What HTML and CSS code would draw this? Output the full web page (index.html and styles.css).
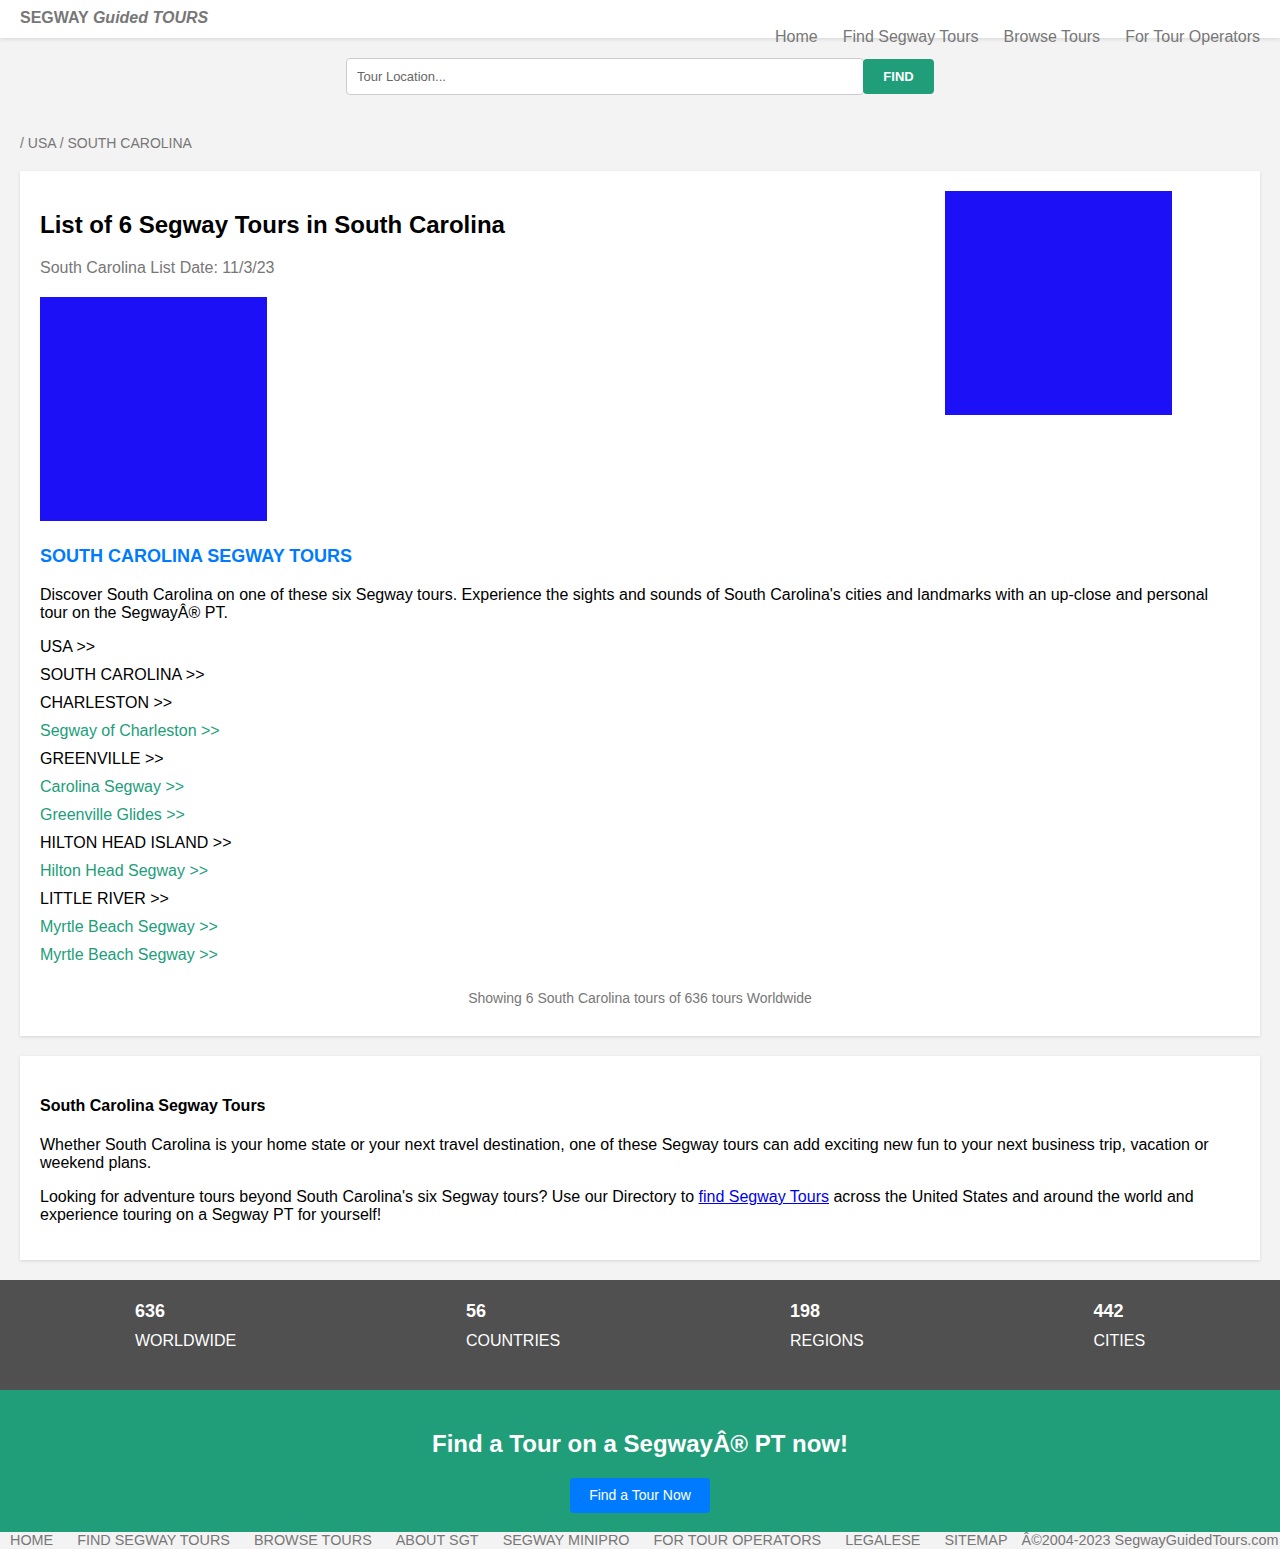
FILE: index.html
```html
<!DOCTYPE html>
<html lang="en">
<head>
<meta charset="utf-8">
<title>Segway Tours in South Carolina</title>
<link rel="stylesheet" href="styles.css">
</head>
<body>
<header class="topbar">
  <div class="logo">SEGWAY <em>Guided TOURS</em></div>
  <nav class="mainnav">
    <a href="#">Home</a>
    <a href="#">Find Segway Tours</a>
    <a href="#">Browse Tours</a>
    <a href="#">For Tour Operators</a>
  </nav>
</header>

<form class="search">
  <input class="search-input" type="text" placeholder="Tour Location...">
  <button class="search-btn" type="button">FIND</button>
</form>

<div class="crumbs">/ USA / SOUTH CAROLINA</div>

<main>
  <section class="card card-list">
    <div class="list-top">
      <div class="list-main">
        <h1 class="list-title">List of 6 Segway Tours in South Carolina</h1>
        <p class="list-date">South Carolina List Date: 11/3/23</p>
        <div class="blue-box"></div>
      </div>
      <div class="list-side">
        <div class="blue-box"></div>
      </div>
    </div>
    <h2 class="section-head">SOUTH CAROLINA SEGWAY TOURS</h2>
    <p class="desc">Discover South Carolina on one of these six Segway tours. Experience the sights and sounds of South Carolina's cities and landmarks with an up-close and personal tour on the SegwayÂ® PT.</p>
    <ul class="tour-list">
      <li>USA &gt;&gt;</li>
      <li>SOUTH CAROLINA &gt;&gt;</li>
      <li>CHARLESTON &gt;&gt;</li>
      <li><a class="tour" href="#">Segway of Charleston &gt;&gt;</a></li>
      <li>GREENVILLE &gt;&gt;</li>
      <li><a class="tour" href="#">Carolina Segway &gt;&gt;</a></li>
      <li><a class="tour" href="#">Greenville Glides &gt;&gt;</a></li>
      <li>HILTON HEAD ISLAND &gt;&gt;</li>
      <li><a class="tour" href="#">Hilton Head Segway &gt;&gt;</a></li>
      <li>LITTLE RIVER &gt;&gt;</li>
      <li><a class="tour" href="#">Myrtle Beach Segway &gt;&gt;</a></li>
      <li><a class="tour" href="#">Myrtle Beach Segway &gt;&gt;</a></li>
    </ul>
    <p class="showing">Showing 6 South Carolina tours of 636 tours Worldwide</p>
  </section>

  <section class="card card-about">
    <h3 class="about-head">South Carolina Segway Tours</h3>
    <p class="about-p">Whether South Carolina is your home state or your next travel destination, one of these Segway tours can add exciting new fun to your next business trip, vacation or weekend plans.</p>
    <p class="about-p">Looking for adventure tours beyond South Carolina's six Segway tours? Use our Directory to <a class="inline-link" href="#">find Segway Tours</a> across the United States and around the world and experience touring on a Segway PT for yourself!</p>
  </section>
</main>

<section class="stats">
  <div class="stat"><div class="stat-num">636</div><div class="stat-label">WORLDWIDE</div></div>
  <div class="stat"><div class="stat-num">56</div><div class="stat-label">COUNTRIES</div></div>
  <div class="stat"><div class="stat-num">198</div><div class="stat-label">REGIONS</div></div>
  <div class="stat"><div class="stat-num">442</div><div class="stat-label">CITIES</div></div>
</section>

<section class="cta">
  <h2 class="cta-title">Find a Tour on a SegwayÂ® PT now!</h2>
  <a class="cta-btn" href="#">Find a Tour Now</a>
</section>

<footer class="footer">
  <a href="#">HOME</a>
  <a href="#">FIND SEGWAY TOURS</a>
  <a href="#">BROWSE TOURS</a>
  <a href="#">ABOUT SGT</a>
  <a href="#">SEGWAY MINIPRO</a>
  <a href="#">FOR TOUR OPERATORS</a>
  <a href="#">LEGALESE</a>
  <a href="#">SITEMAP</a>
  <span class="copy">Â©2004-2023 SegwayGuidedTours.com</span>
</footer>
</body>
</html>
```

FILE: styles.css
```css
* { box-sizing: border-box; }
html, body { margin: 0; padding: 0; }
body {
  background: #f3f3f3;
  font-family: "Liberation Sans", Arial, Helvetica, sans-serif;
  color: #000;
  font-size: 16px;
  line-height: 18px;
}
a { text-decoration: none; }

.topbar {
  height: 38px;
  background: #fff;
  box-shadow: 0 1px 4px rgba(0,0,0,0.12);
  display: flex;
  justify-content: space-between;
  align-items: flex-start;
  padding: 0 20px;
  position: relative;
  z-index: 1;
}
.logo {
  font-weight: bold;
  font-size: 16px;
  line-height: 18px;
  color: #777;
  padding-top: 9px;
}
.logo em { font-style: italic; }
.mainnav {
  display: flex;
  gap: 25px;
  padding-top: 28px;
}
.mainnav a {
  color: #777;
  font-size: 16px;
  line-height: 18px;
}

.search {
  display: flex;
  justify-content: center;
  margin: 20px 0 0;
}
.search-input {
  width: 518px;
  height: 37px;
  border: 1px solid #ccc;
  border-radius: 4px;
  padding: 0 10px;
  font-family: "Liberation Sans", Arial, sans-serif;
  font-size: 13px;
  color: #555;
  background: #fff;
}
.search-input::placeholder { color: #666; }
.search-btn {
  width: 71px;
  height: 35px;
  margin-top: 1px;
  margin-left: -1px;
  background: #209e79;
  color: #fff;
  border: none;
  border-radius: 4px;
  font-family: "Liberation Sans", Arial, sans-serif;
  font-weight: bold;
  font-size: 13px;
}

.crumbs {
  margin: 40px 20px 0;
  font-size: 14px;
  line-height: 16px;
  color: #777;
}

main { padding: 20px 20px 20px; }
.card {
  background: #fff;
  box-shadow: 0 1px 3px rgba(0,0,0,0.12);
  padding: 20px;
}
.card + .card { margin-top: 20px; }

.list-top {
  display: grid;
  grid-template-columns: 3fr 1fr;
}
.list-side { padding-left: 5px; }
.list-title {
  margin: 20px 0 20px;
  font-size: 24px;
  line-height: 28px;
  font-weight: bold;
}
.list-date {
  margin: 0 0 20px;
  color: #777;
  font-size: 16px;
}
.blue-box {
  width: 227px;
  height: 224px;
  background: #1c10f6;
}
.section-head {
  margin: 25px 0 19px;
  color: #007bff;
  font-size: 18px;
  line-height: 21px;
  font-weight: bold;
}
.desc { margin: 0 0 16px; }
.tour-list {
  list-style: none;
  margin: 0;
  padding: 0;
}
.tour-list li { margin-bottom: 10px; }
.tour { color: #209e79; }
.showing {
  margin: 26px 0 10px;
  text-align: center;
  font-size: 14px;
  line-height: 16px;
  color: #777;
}

.card-about { padding-bottom: 20px; }
.about-head {
  margin: 21px 0 21px;
  font-size: 16px;
  line-height: 18px;
  font-weight: bold;
}
.about-p { margin: 0 0 16px; }
.inline-link { color: #0000ee; text-decoration: underline; }

.stats {
  background: #505050;
  color: #fff;
  display: flex;
  justify-content: space-around;
  padding: 21px 20px 39px;
}
.stat-num {
  font-size: 18px;
  line-height: 21px;
  font-weight: bold;
  margin-bottom: 9px;
}
.stat-label { font-size: 16px; line-height: 20px; }

.cta {
  background: #209e79;
  text-align: center;
  padding: 40px 0 19px;
}
.cta-title {
  margin: 0 0 20px;
  color: #fff;
  font-size: 24px;
  line-height: 28px;
  font-weight: bold;
}
.cta-btn {
  display: inline-block;
  background: #007bff;
  color: #fff;
  font-size: 14px;
  line-height: 35px;
  height: 35px;
  padding: 0 19px;
  border-radius: 4px;
}

.footer {
  display: flex;
  white-space: nowrap;
  padding-left: 10px;
  font-size: 14.4px;
  line-height: 17px;
  background: #f3f3f3;
}
.footer a { color: #777; margin-right: 24px; }
.footer a:nth-last-of-type(1) { margin-right: 14px; }
.copy { color: #777; }
```
